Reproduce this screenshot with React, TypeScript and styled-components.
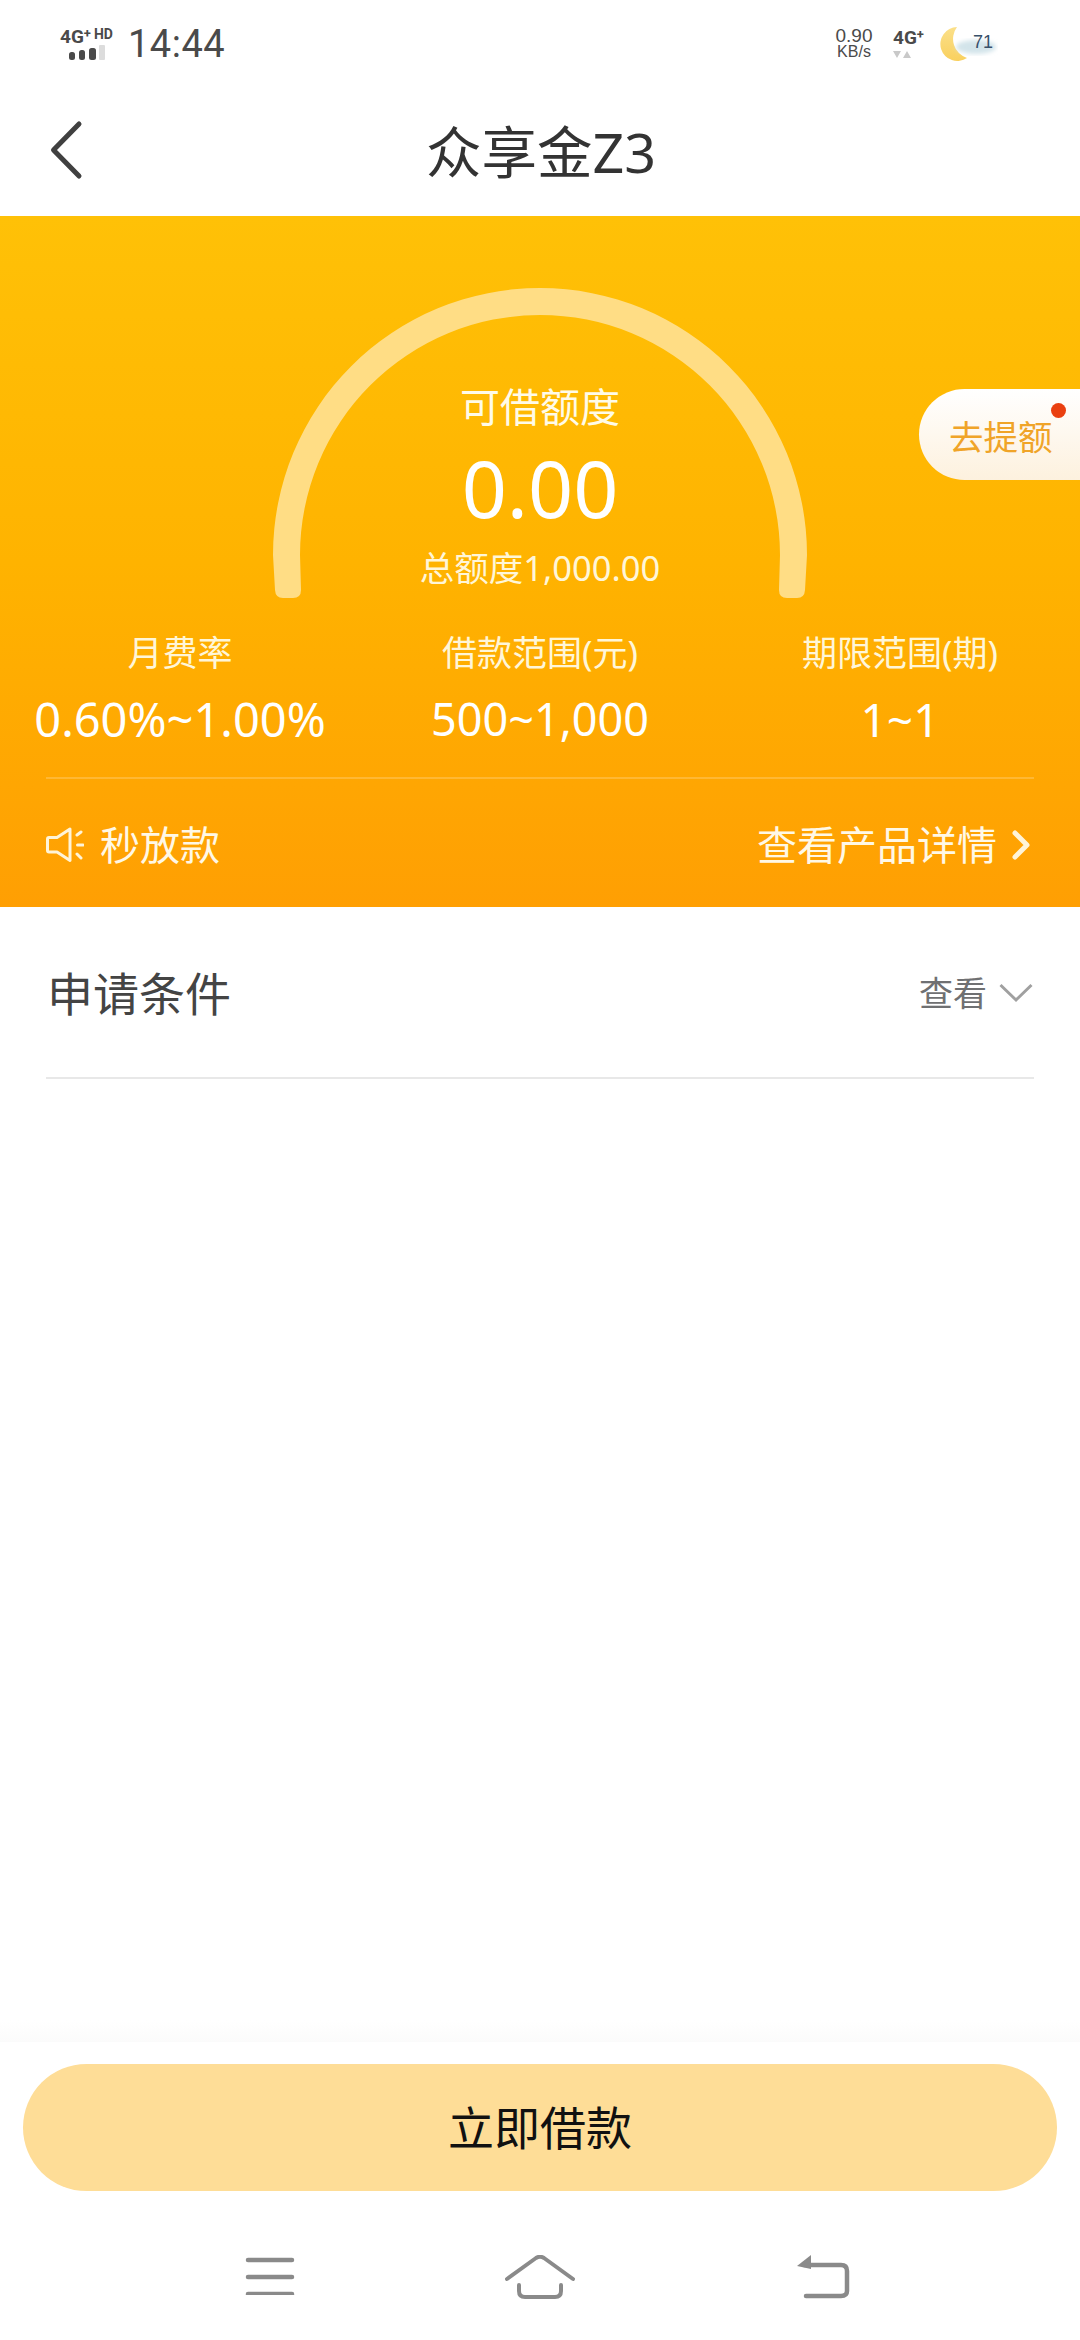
import styled, { createGlobalStyle } from "styled-components";

const GlobalStyle = createGlobalStyle`
  html, body {
    margin: 0;
    padding: 0;
    background: #fff;
  }
  * {
    box-sizing: border-box;
  }
`;

const fontStack = `"Noto Sans", "Noto Sans CJK SC", sans-serif`;

const Page = styled.div`
  width: 1080px;
  height: 2340px;
  display: flex;
  flex-direction: column;
  font-family: ${fontStack};
  background: #fff;
  overflow: hidden;
`;

const StatusBar = styled.div`
  height: 88px;
  display: flex;
  align-items: center;
  justify-content: space-between;
  padding: 0 82px 0 60px;
  color: #4a4a4a;
`;

const StatusGroup = styled.div`
  display: flex;
  align-items: center;
`;

const SignalStack = styled.div`
  width: 56px;
  display: flex;
  flex-direction: column;
  margin-right: 12px;
`;

const TinyLabel = styled.div`
  display: flex;
  align-items: flex-start;
  height: 17px;
  font-family: "Roboto", sans-serif;
  font-size: 19px;
  line-height: 18px;
  font-weight: 700;
  white-space: nowrap;
`;

const Sup = styled.span<{ $size?: number }>`
  font-size: ${({ $size }) => $size ?? 13}px;
  line-height: 12px;
  margin-left: ${({ $size }) => ($size ? 3 : 0)}px;
`;

const Clock = styled.div`
  font-family: "Roboto", sans-serif;
  font-size: 38px;
  line-height: 40px;
  letter-spacing: 0.5px;
`;

const Speed = styled.div`
  width: 40px;
  margin-right: 19px;
  display: flex;
  flex-direction: column;
  align-items: center;
  font-family: "Liberation Sans", sans-serif;
`;

const SpeedValue = styled.div<{ $size: number }>`
  font-size: ${({ $size }) => $size}px;
  line-height: 16px;
  white-space: nowrap;
`;

const NetStack = styled.div`
  width: 34px;
  margin-right: 13px;
  display: flex;
  flex-direction: column;
  gap: 4px;
`;

const Weather = styled.div`
  position: relative;
  width: 58px;
  height: 36px;
`;

const WeatherTemp = styled.span`
  position: absolute;
  left: 33px;
  top: 6px;
  font-family: "Liberation Sans", sans-serif;
  font-size: 18px;
  line-height: 20px;
  color: #37506a;
`;

const Header = styled.div`
  height: 128px;
  position: relative;
  display: flex;
  align-items: center;
  justify-content: center;
  padding-left: 2px;
  color: #333;
  font-size: 55.5px;
  line-height: 70px;
`;

const BackIcon = styled.svg`
  position: absolute;
  left: 48px;
  top: 31px;
`;

const Banner = styled.section`
  height: 691px;
  background: linear-gradient(180deg, #ffc107 0%, #ffb300 50%, #ff9f03 100%);
  position: relative;
  display: flex;
  flex-direction: column;
  padding-top: 72px;
  color: #fff;
`;

const Gauge = styled.div`
  position: relative;
  width: 534px;
  height: 310px;
  margin: 0 auto;
  display: flex;
  flex-direction: column;
  align-items: center;
  padding-top: 92px;
`;

const GaugeArc = styled.svg`
  position: absolute;
  left: 0;
  top: 0;
`;

const GaugeLabel = styled.div`
  font-size: 40px;
  line-height: 54px;
  color: #fffbe8;
`;

const GaugeValue = styled.div`
  font-size: 79px;
  line-height: 92px;
  margin-top: 8px;
`;

const GaugeTotal = styled.div`
  font-size: 34.500px;
  line-height: 46px;
  margin-top: 11px;
  color: #fff6d8;
`;

const WithdrawTab = styled.div`
  position: absolute;
  right: 0;
  top: 173px;
  width: 161px;
  height: 91px;
  border-radius: 46px 0 0 46px;
  background: linear-gradient(180deg, #ffffff 0%, #fdf1de 100%);
  color: #f0a428;
  font-size: 34.500px;
  line-height: 96px;
  padding-left: 30px;
  white-space: nowrap;
`;

const RedDot = styled.span`
  position: absolute;
  right: 14px;
  top: 14px;
  width: 15px;
  height: 15px;
  border-radius: 50%;
  background: #ea4010;
`;

const StatsRow = styled.div`
  display: grid;
  grid-template-columns: repeat(3, 360px);
  margin-top: 32px;
`;

const Stat = styled.div`
  display: flex;
  flex-direction: column;
  align-items: center;
  gap: 13px;
`;

const StatLabel = styled.div`
  font-size: 35px;
  line-height: 46px;
  color: #fff6d8;
  white-space: nowrap;
`;

const StatValue = styled.div<{ $size: number }>`
  font-size: ${({ $size }) => $size}px;
  line-height: 60px;
  white-space: nowrap;
`;

const BannerDivider = styled.div`
  height: 2px;
  margin: 28px 46px 0;
  background: rgba(255, 255, 255, 0.2);
`;

const BannerFoot = styled.div`
  flex: 1;
  display: flex;
  align-items: center;
  justify-content: space-between;
  padding: 4px 48px 0 46px;
  font-size: 40px;
  line-height: 54px;
  color: #fff8e6;
`;

const FootGroup = styled.div<{ $gap: number }>`
  display: flex;
  align-items: center;
  gap: ${({ $gap }) => $gap}px;
`;

const Conditions = styled.div`
  height: 172px;
  margin: 0 46px;
  padding: 2px 1px 0 1px;
  border-bottom: 2px solid #e8e8e8;
  display: flex;
  align-items: center;
  justify-content: space-between;
`;

const ConditionsTitle = styled.div`
  font-size: 46px;
  line-height: 60px;
  color: #444;
`;

const ViewToggle = styled.div`
  display: flex;
  align-items: center;
  gap: 12px;
  font-size: 34px;
  line-height: 46px;
  color: #6f7072;
`;

const Spacer = styled.div`
  flex: 1;
`;

const FooterFade = styled.div`
  height: 22px;
  background: linear-gradient(180deg, #ffffff 0%, #fbfbfb 100%);
`;

const Footer = styled.div`
  padding: 22px 23px 0;
`;

const PrimaryButton = styled.button`
  display: block;
  width: 100%;
  height: 127px;
  border: 0;
  border-radius: 64px;
  background: #fedd97;
  color: #111;
  font-family: ${fontStack};
  font-size: 46px;
  line-height: 127px;
  padding: 0;
`;

const NavBar = styled.nav`
  height: 149px;
  display: grid;
  grid-template-columns: 270px 270px 296px;
  justify-items: center;
  align-items: start;
  padding: 64px 0 0 135px;
`;

export default function App() {
  return (
    <Page>
      <GlobalStyle />
      <StatusBar>
        <StatusGroup>
          <SignalStack>
            <TinyLabel>
              4G<Sup>+</Sup>
              <Sup $size={14}>HD</Sup>
            </TinyLabel>
            <svg width="46" height="16" viewBox="0 0 46 16">
              <rect x="9" y="7" width="6" height="8" rx="2.500" fill="#4a4a4a" />
              <rect x="19" y="5" width="6" height="10" rx="2.500" fill="#4a4a4a" />
              <rect x="29" y="3" width="7" height="12" rx="2.500" fill="#4a4a4a" />
              <rect x="39" y="0" width="6" height="15" rx="1" fill="#dcdcdc" />
            </svg>
          </SignalStack>
          <Clock>14:44</Clock>
        </StatusGroup>
        <StatusGroup>
          <Speed>
            <SpeedValue $size={19}>0.90</SpeedValue>
            <SpeedValue $size={16}>KB/s</SpeedValue>
          </Speed>
          <NetStack>
            <TinyLabel>
              4G<Sup>+</Sup>
            </TinyLabel>
            <svg width="20" height="9" viewBox="0 0 20 9">
              <path d="M0 1h8l-4 7zM10 8h8l-4-7z" fill="#c9c9c9" />
            </svg>
          </NetStack>
          <Weather>
            <svg width="58" height="36" viewBox="0 0 58 36">
              <defs>
                <linearGradient id="moon" x1="0" y1="0" x2="0" y2="1">
                  <stop offset="0" stopColor="#fbe08a" />
                  <stop offset="1" stopColor="#f9d05e" />
                </linearGradient>
                <filter id="soft">
                  <feGaussianBlur stdDeviation="2" />
                </filter>
              </defs>
              <path d="M17 1A17 17 0 1 0 27 32A20 20 0 0 1 17 1Z" fill="url(#moon)" />
              <ellipse cx="36" cy="21" rx="20" ry="7" fill="#d3e4ea" filter="url(#soft)" />
            </svg>
            <WeatherTemp>71</WeatherTemp>
          </Weather>
        </StatusGroup>
      </StatusBar>

      <Header>
        <BackIcon width="40" height="62" viewBox="0 0 40 62" fill="none">
          <path
            d="M31 5L5.500 31L31 57"
            stroke="#404040"
            strokeWidth="5"
            strokeLinecap="round"
            strokeLinejoin="round"
          />
        </BackIcon>
        众享金Z3
      </Header>

      <Banner>
        <Gauge>
          <GaugeArc width="534" height="310" viewBox="0 0 534 310">
            <path
              d="M0 267A267 267 0 0 1 534 267L532 302Q531.500 310 524 310H514Q506 310 506 302L507 267A240 240 0 0 0 27 267L28 302Q28 310 20 310H10Q2.500 310 2 302Z"
              fill="#ffdd85"
            />
          </GaugeArc>
          <GaugeLabel>可借额度</GaugeLabel>
          <GaugeValue>0.00</GaugeValue>
          <GaugeTotal>总额度1,000.00</GaugeTotal>
        </Gauge>

        <WithdrawTab>
          去提额
          <RedDot />
        </WithdrawTab>

        <StatsRow>
          <Stat>
            <StatLabel>月费率</StatLabel>
            <StatValue $size={47}>0.60%~1.00%</StatValue>
          </Stat>
          <Stat>
            <StatLabel>借款范围(元)</StatLabel>
            <StatValue $size={45}>500~1,000</StatValue>
          </Stat>
          <Stat>
            <StatLabel>期限范围(期)</StatLabel>
            <StatValue $size={46}>1~1</StatValue>
          </Stat>
        </StatsRow>

        <BannerDivider />

        <BannerFoot>
          <FootGroup $gap={16}>
            <svg width="38" height="38" viewBox="0 0 38 38" fill="none" stroke="#fff4d8" strokeLinecap="round" strokeLinejoin="round">
              <path
                d="M24 3L11 11.500H3Q1.500 11.500 1.500 13V24.500Q1.500 26 3 26H11L24 34.500Z"
                strokeWidth="3"
              />
              <path d="M31 9L35 6M31.500 19H37M31 28L35 32" strokeWidth="3" />
            </svg>
            <span>秒放款</span>
          </FootGroup>
          <FootGroup $gap={14}>
            <span>查看产品详情</span>
            <svg width="21" height="32" viewBox="0 0 21 32" fill="none">
              <path
                d="M4 4L16 16L4 28"
                stroke="#fff4d8"
                strokeWidth="5"
                strokeLinecap="round"
                strokeLinejoin="round"
              />
            </svg>
          </FootGroup>
        </BannerFoot>
      </Banner>

      <Conditions>
        <ConditionsTitle>申请条件</ConditionsTitle>
        <ViewToggle>
          <span>查看</span>
          <svg width="34" height="20" viewBox="0 0 34 20" fill="none">
            <path d="M1.500 2L17 17L32.500 2" stroke="#a0a0a0" strokeWidth="3" />
          </svg>
        </ViewToggle>
      </Conditions>

      <Spacer />

      <FooterFade />
      <Footer>
        <PrimaryButton>立即借款</PrimaryButton>
      </Footer>

      <NavBar>
        <svg width="50" height="40" viewBox="0 0 50 40" fill="none" stroke="#8a8a8a" strokeWidth="4.500" strokeLinecap="round">
          <path d="M3 5H47M3 22H47M3 39H47" />
        </svg>
        <svg width="70" height="44" viewBox="0 0 70 44" fill="none" stroke="#8a8a8a" strokeWidth="4" strokeLinecap="round" strokeLinejoin="round">
          <path d="M2 24L31 3Q35 0.500 39 3L68 24" />
          <path d="M14 30V36Q14 42 20 42H50Q56 42 56 36V30" />
        </svg>
        <svg width="54" height="44" viewBox="0 0 54 44" fill="none">
          <path d="M1 11L15 0V8V14Z" fill="#8a8a8a" />
          <path
            d="M8 10H45Q51 10 51 16V36Q51 41 45 41H10"
            stroke="#8a8a8a"
            strokeWidth="4.500"
            strokeLinecap="round"
          />
        </svg>
      </NavBar>
    </Page>
  );
}
